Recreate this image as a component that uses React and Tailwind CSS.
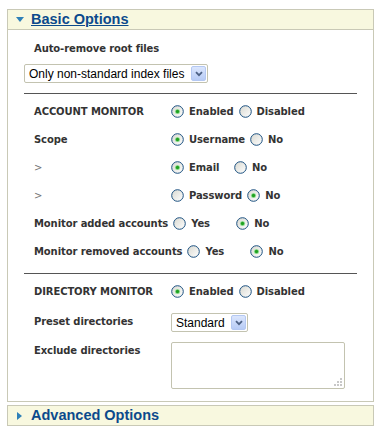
import React from 'react';

const Radio = ({ checked }) => (
  <svg width="13" height="13" viewBox="0 0 13 13" className="shrink-0">
    <defs>
      <linearGradient id="rg" x1="0" y1="0" x2="1" y2="1">
        <stop offset="0" stopColor="#d8d8d0" />
        <stop offset="1" stopColor="#ffffff" />
      </linearGradient>
    </defs>
    <circle cx="6.5" cy="6.5" r="5.8" fill="url(#rg)" stroke="#1c5180" strokeWidth="1" />
    {checked && (
      <>
        <circle cx="6.5" cy="6.5" r="2.6" fill="#9be09b" />
        <circle cx="6.5" cy="6.5" r="1.7" fill="#21a121" />
      </>
    )}
  </svg>
);

const Option = ({ checked, label }) => (
  <span className="inline-flex items-center gap-[5px] min-w-[58px] mr-[5px]">
    <Radio checked={checked} />
    <span>{label}</span>
  </span>
);

const Row = ({ label, options, plain }) => (
  <div className="flex items-center h-[28px] pl-[26px]">
    <span className={`shrink-0 min-w-[132px] mr-[5px] ${plain ? 'font-normal text-[#777]' : ''}`}>{label}</span>
    <div className="flex items-center">
      {options.map((o) => (
        <Option key={o.label} checked={o.checked} label={o.label} />
      ))}
    </div>
  </div>
);

const Select = ({ value, width }) => (
  <div
    className={`flex items-center justify-between h-[19px] border border-[#c3c3b0] rounded-[2px] bg-white pl-[4px] pr-[1px] ${width}`}
  >
    <span className="font-['Liberation_Sans',sans-serif] font-normal tracking-normal text-[12px] text-black leading-none whitespace-nowrap">
      {value}
    </span>
    <span className="flex shrink-0 items-center justify-center w-[15px] h-[15px] rounded-[2px] border border-[#b4c8f2] bg-gradient-to-b from-[#dbe6fd] to-[#b7cbf5]">
      <svg width="8" height="6" viewBox="0 0 8 6">
        <path d="M1 1.2 L4 4.2 L7 1.2" fill="none" stroke="#4d6185" strokeWidth="1.8" />
      </svg>
    </span>
  </div>
);

const Divider = ({ className }) => <div className={`mx-[16px] h-px bg-[#555] ${className}`} />;

export default function App() {
  return (
    <div className="w-[381px] h-[437px] bg-white pt-[9px] px-[7px] font-['DejaVu_Sans',sans-serif] text-[10px] tracking-[-0.1px] font-bold text-[#333]">
      <div className="w-[367px] border border-[#c9c9b6]">
        <div className="flex items-center h-[20px] bg-[#f8f8df] border-b border-[#c9c9b6] pl-[8px]">
          <svg width="8" height="5" viewBox="0 0 8 5" className="mr-[7px]">
            <path d="M0 0 H8 L4 5 Z" fill="#2e80b8" />
          </svg>
          <span className="font-['Liberation_Sans',sans-serif] tracking-normal text-[14.5px] font-bold text-[#0c4a8c] underline leading-none">
            Basic Options
          </span>
        </div>

        <div className="pb-[12px]">
          <div className="flex items-center h-[20px] mt-[8px] pl-[26px]">Auto-remove root files</div>
          <div className="mt-[6px] pl-[16px]">
            <Select value="Only non-standard index files" width="w-[184px]" />
          </div>

          <Divider className="mt-[10px]" />

          <div className="mt-[3px]">
            <Row label="ACCOUNT MONITOR" options={[{ label: 'Enabled', checked: true }, { label: 'Disabled' }]} />
            <Row label="Scope" options={[{ label: 'Username', checked: true }, { label: 'No' }]} />
            <Row label=">" plain options={[{ label: 'Email', checked: true }, { label: 'No' }]} />
            <Row label=">" plain options={[{ label: 'Password' }, { label: 'No', checked: true }]} />
            <Row label="Monitor added accounts" options={[{ label: 'Yes' }, { label: 'No', checked: true }]} />
            <Row label="Monitor removed accounts" options={[{ label: 'Yes' }, { label: 'No', checked: true }]} />
          </div>

          <Divider className="mt-[8px]" />

          <div className="mt-[3px]">
            <Row label="DIRECTORY MONITOR" options={[{ label: 'Enabled', checked: true }, { label: 'Disabled' }]} />
          </div>

          <div className="flex items-start mt-[8px] pl-[26px]">
            <span className="shrink-0 w-[137px] pt-[1px]">Preset directories</span>
            <Select value="Standard" width="w-[77px]" />
          </div>

          <div className="flex items-start mt-[10px] pl-[26px]">
            <span className="shrink-0 w-[137px] pt-[1px]">Exclude directories</span>
            <div className="relative w-[174px] h-[47px] border border-[#c3c3b0] rounded-[2px] bg-white">
              <svg width="9" height="9" viewBox="0 0 9 9" className="absolute right-[1px] bottom-[1px]">
                <rect x="6" y="0" width="2" height="2" fill="#c8c8c8" />
                <rect x="3" y="3" width="2" height="2" fill="#c8c8c8" />
                <rect x="6" y="3" width="2" height="2" fill="#c8c8c8" />
                <rect x="0" y="6" width="2" height="2" fill="#c8c8c8" />
                <rect x="3" y="6" width="2" height="2" fill="#c8c8c8" />
                <rect x="6" y="6" width="2" height="2" fill="#c8c8c8" />
              </svg>
            </div>
          </div>
        </div>
      </div>

      <div className="mt-[3px] w-[367px] flex items-center h-[21px] bg-[#f8f8df] border border-[#c9c9b6] pl-[9px]">
        <svg width="5" height="8" viewBox="0 0 5 8" className="mr-[9px]">
          <path d="M0 0 V8 L5 4 Z" fill="#2e80b8" />
        </svg>
        <span className="font-['Liberation_Sans',sans-serif] tracking-normal text-[14.5px] font-bold text-[#0c4a8c] leading-none">
          Advanced Options
        </span>
      </div>
    </div>
  );
}
